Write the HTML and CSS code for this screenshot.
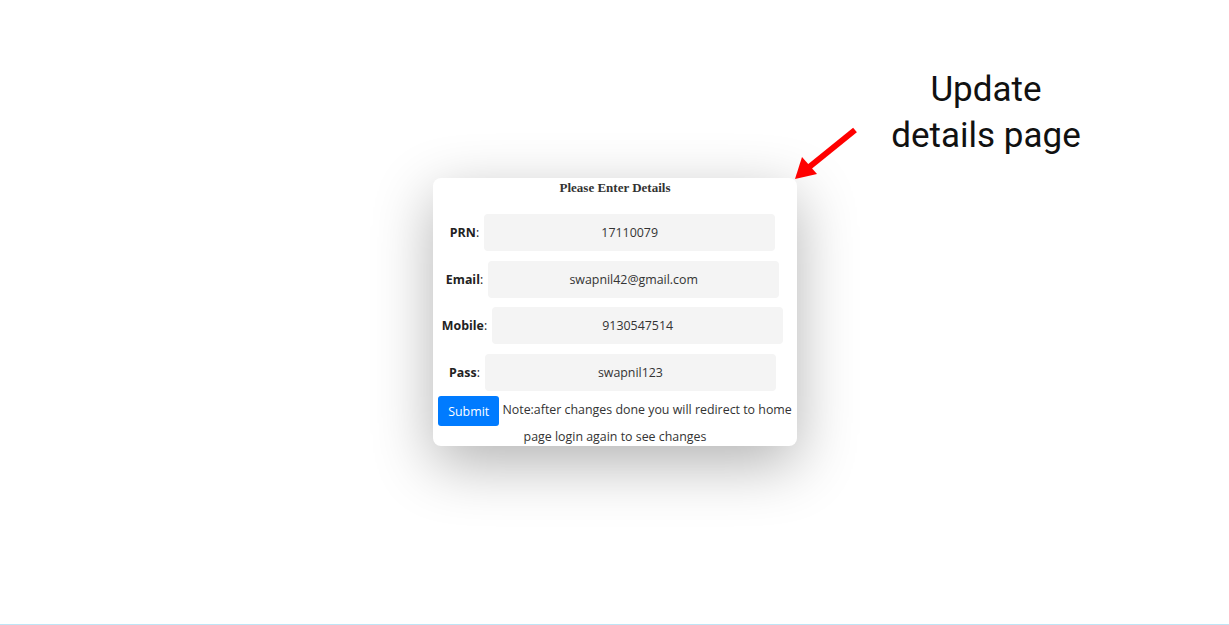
FILE: index.html
```html
<!DOCTYPE html>
<html>
<head>
<meta charset="utf-8">
<link rel="stylesheet" href="styles.css">
</head>
<body>
<div class="page">
  <div class="card">
    <h4 class="title">Please Enter Details</h4>
    <div class="row"><label class="lbl"><b>PRN</b>:</label><div class="field">17110079</div></div>
    <div class="row"><label class="lbl"><b>Email</b>:</label><div class="field">swapnil42@gmail.com</div></div>
    <div class="row"><label class="lbl"><b>Mobile</b>:</label><div class="field">9130547514</div></div>
    <div class="row"><label class="lbl"><b>Pass</b>:</label><div class="field">swapnil123</div></div>
    <p class="note"><button class="submit">Submit</button> Note:after changes done you will redirect to home page login again to see changes</p>
  </div>
  <div class="annot">
    <svg class="arrow" width="70" height="60" viewBox="0 0 70 60">
      <line x1="65" y1="4" x2="18" y2="42" stroke="#ff0000" stroke-width="6"/>
      <polygon points="5,53 12,31 27,48" fill="#ff0000"/>
    </svg>
    <div class="annot-text">Update<br>details page</div>
  </div>
</div>
</body>
</html>
```
FILE: styles.css
```css
html, body {
  margin: 0;
  padding: 0;
  background: #fff;
}
.page {
  position: relative;
  height: 624px;
  border-bottom: 1px solid #bfe4f5;
  display: flex;
  align-items: center;
  justify-content: center;
  font-family: "Open Sans", "Noto Sans", sans-serif;
  color: #333;
}
.card {
  width: 354px;
  padding: 0 5px;
  background: #fff;
  border-radius: 8px;
  box-shadow: 0 18px 60px rgba(0, 0, 0, 0.3);
  margin-left: 1px;
}
.title {
  margin: 0 0 18px;
  padding-top: 2px;
  font-family: "Liberation Serif", serif;
  font-size: 13px;
  line-height: 16px;
  font-weight: bold;
  text-align: center;
  color: #333;
}
.row {
  display: flex;
  align-items: center;
  justify-content: center;
  gap: 5px;
  margin-bottom: 9.5px;
  margin-left: -5px;
}
.lbl {
  font-size: 12.4px;
  color: #222;
}
.field {
  width: 291px;
  height: 37px;
  line-height: 37px;
  background: #f4f4f4;
  border-radius: 4px;
  text-align: center;
  font-size: 12.4px;
  color: #333;
}
.note {
  margin: -6px -4px 0;
  font-size: 12.4px;
  line-height: 18px;
  text-align: center;
  color: #333;
}
.submit {
  display: inline-block;
  vertical-align: middle;
  height: 30px;
  padding: 0 10px;
  border: none;
  border-radius: 3px;
  background: #007bff;
  color: #fff;
  font-family: "Open Sans", "Noto Sans", sans-serif;
  font-size: 12.4px;
  margin: 2px 0 2px;
}
.annot {
  position: absolute;
  left: 790px;
  top: 67px;
}
.arrow {
  position: absolute;
  left: 0;
  top: 59px;
}
.annot-text {
  position: absolute;
  left: 86px;
  top: 0;
  width: 220px;
  text-align: center;
  font-family: Roboto, sans-serif;
  font-size: 35px;
  line-height: 46px;
  color: #111;
}
```
